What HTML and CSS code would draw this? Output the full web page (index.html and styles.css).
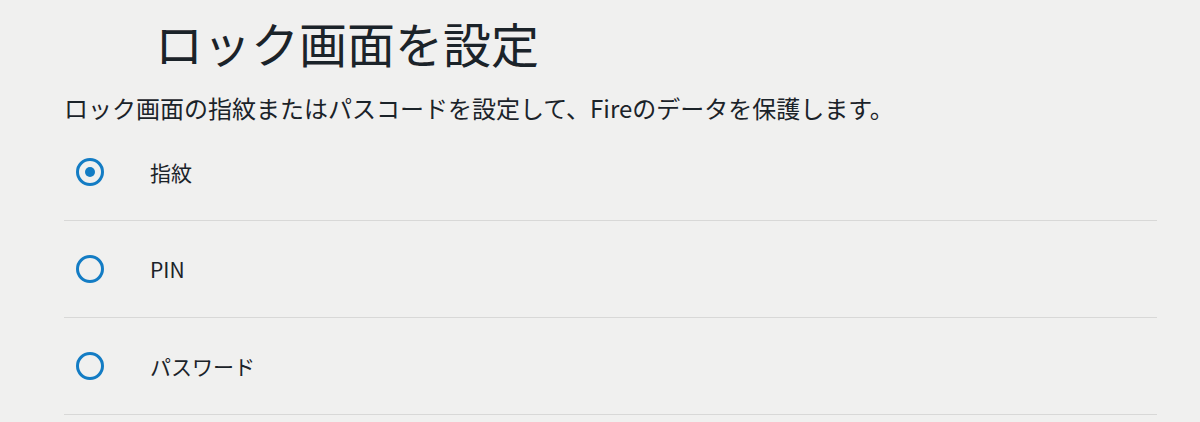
FILE: index.html
```html
<!DOCTYPE html>
<html lang="ja">
<head>
<meta charset="utf-8">
<link rel="stylesheet" href="styles.css">
</head>
<body>
<main class="page">
  <h1 class="title">ロック画面を設定</h1>
  <p class="desc">ロック画面の指紋またはパスコードを設定して、Fireのデータを保護します。</p>
  <ul class="options">
    <li class="option"><span class="radio checked"></span><span class="label">指紋</span></li>
    <li class="option"><span class="radio"></span><span class="label">PIN</span></li>
    <li class="option"><span class="radio"></span><span class="label">パスワード</span></li>
  </ul>
</main>
</body>
</html>
```
FILE: styles.css
```css
html, body {
  margin: 0;
  padding: 0;
  background: #f0f0ef;
}
body {
  font-family: "Noto Sans CJK JP", "Noto Sans", sans-serif;
  color: #1b2329;
}
.page {
  width: 1093px;
  padding: 10px 0 0 64px;
}
.title {
  margin: 0;
  padding-left: 91px;
  font-size: 48px;
  font-weight: 400;
  line-height: 64px;
}
.desc {
  margin: 18px 0 0;
  font-size: 24px;
  line-height: 32px;
}
.options {
  list-style: none;
  margin: 0;
  padding: 0;
}
.option {
  display: flex;
  align-items: center;
  height: 96px;
  border-bottom: 1px solid #d8d8d7;
  padding-left: 12px;
}
.radio {
  box-sizing: border-box;
  width: 28px;
  height: 28px;
  border: 3px solid #137cc4;
  border-radius: 50%;
  display: flex;
  align-items: center;
  justify-content: center;
  margin-right: 46px;
}
.radio.checked::after {
  content: "";
  width: 10px;
  height: 10px;
  border-radius: 50%;
  background: #137cc4;
}
.label {
  font-size: 21px;
  line-height: 28px;
}
```
